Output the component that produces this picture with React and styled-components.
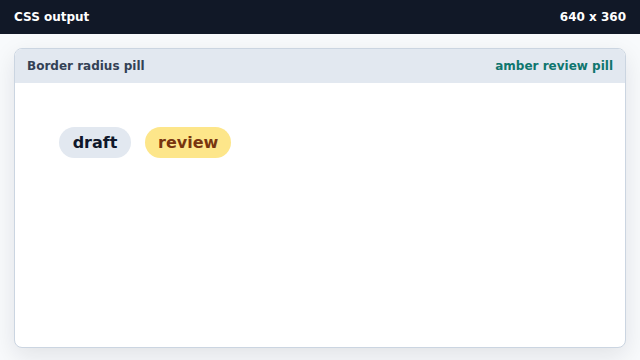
import React from "react";
import styled, { createGlobalStyle } from "styled-components";

const Global = createGlobalStyle`
  html, body { margin: 0; padding: 0; }
  body { background: #f8fafc; font-family: "DejaVu Sans", sans-serif; }
  #root { width: 640px; height: 360px; }
`;

const Page = styled.div`
  width: 640px;
  height: 360px;
  display: flex;
  flex-direction: column;
  background: #f8fafc;
`;

const TopBar = styled.header`
  height: 34px;
  flex: none;
  background: #111827;
  color: #ffffff;
  display: flex;
  align-items: center;
  justify-content: space-between;
  padding: 0 14px;
  font-size: 12px;
  font-weight: bold;
`;

const Main = styled.main`
  flex: 1;
  padding: 14px 14px 12px;
  display: flex;
  min-height: 0;
`;

const Card = styled.section`
  flex: 1;
  display: flex;
  flex-direction: column;
  background: #ffffff;
  border: 1px solid #cbd5e1;
  border-radius: 8px;
  overflow: hidden;
  box-shadow: 0 8px 24px rgba(15, 23, 42, 0.1);
`;

const CardHead = styled.div`
  height: 34px;
  flex: none;
  background: #e2e8f0;
  display: flex;
  align-items: center;
  justify-content: space-between;
  padding: 0 12px;
  font-size: 12px;
  font-weight: bold;
`;

const Title = styled.span`
  color: #334155;
`;

const Note = styled.span`
  color: #0f766e;
`;

const Body = styled.div`
  flex: 1;
  padding: 44px;
  display: flex;
  align-items: flex-start;
  gap: 14px;
`;

const Pill = styled.span`
  display: inline-flex;
  align-items: center;
  justify-content: center;
  height: 31px;
  padding: 0 13px;
  min-width: 72px;
  box-sizing: border-box;
  border-radius: 999px;
  font-size: 16px;
  font-weight: bold;
  background: ${(p) => (p.$tone === "amber" ? "#fde68a" : "#e2e8f0")};
  color: ${(p) => (p.$tone === "amber" ? "#78350f" : "#0f172a")};
`;

export default function App() {
  return (
    <>
      <Global />
      <Page>
        <TopBar>
          <span>CSS output</span>
          <span>640 x 360</span>
        </TopBar>
        <Main>
          <Card>
            <CardHead>
              <Title>Border radius pill</Title>
              <Note>amber review pill</Note>
            </CardHead>
            <Body>
              <Pill>draft</Pill>
              <Pill $tone="amber">review</Pill>
            </Body>
          </Card>
        </Main>
      </Page>
    </>
  );
}
